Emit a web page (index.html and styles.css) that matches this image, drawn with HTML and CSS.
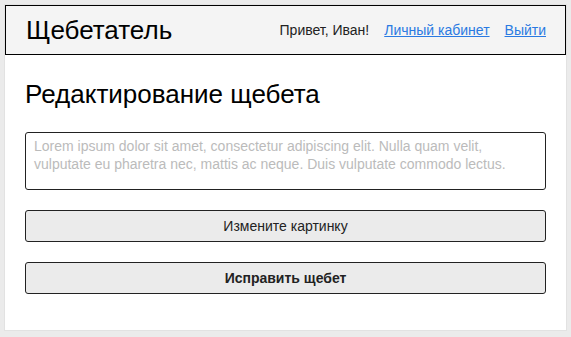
FILE: index.html
```html
<!DOCTYPE html>
<html lang="ru">
<head>
  <meta charset="UTF-8" />
  <title>Редактирование щебета</title>
  <link rel="stylesheet" href="styles.css">
</head>
<body>
  <div class="page">
    <header class="topbar">
      <div class="logo">Щебетатель</div>
      <nav class="user-nav">
        <span class="greeting">Привет, Иван!</span>
        <a href="#">Личный кабинет</a>
        <a href="#">Выйти</a>
      </nav>
    </header>

    <main class="content">
      <h1>Редактирование щебета</h1>
      <form class="edit-form">
        <textarea class="tweet-text" placeholder="Lorem ipsum dolor sit amet, consectetur adipiscing elit. Nulla quam velit, vulputate eu pharetra nec, mattis ac neque. Duis vulputate commodo lectus."></textarea>
        <button type="button" class="btn">Измените картинку</button>
        <button type="submit" class="btn btn-main">Исправить щебет</button>
      </form>
    </main>
  </div>
</body>
</html>
```

FILE: styles.css
```css
body {
  margin: 0;
  padding: 4px;
  background-color: #ebebeb;
  font-family: "Liberation Sans", Arial, sans-serif;
  color: #000;
}
.page {
  background: white;
  border: 1px solid #e2e2e2;
  height: 327px;
  box-sizing: border-box;
}
.topbar {
  display: flex;
  justify-content: space-between;
  align-items: center;
  height: 50px;
  box-sizing: border-box;
  padding: 0 19px 0 20px;
  background-color: #f4f4f4;
  border: 1px solid #000;
}
.logo {
  font-size: 26px;
}
.user-nav {
  display: flex;
  gap: 15px;
  font-size: 14px;
  color: #222;
}
.user-nav a {
  color: #2a7ae2;
}
.content {
  padding: 0 20px 0 20px;
}
h1 {
  font-size: 26px;
  font-weight: normal;
  margin: 24px 0 22px;
}
.edit-form {
  display: flex;
  flex-direction: column;
  gap: 20px;
}
.tweet-text {
  height: 58px;
  box-sizing: border-box;
  padding: 4px 8px;
  border: 1px solid #222;
  border-radius: 3px;
  font-family: inherit;
  font-size: 14px;
  line-height: 18px;
  resize: none;
}
.tweet-text::placeholder {
  color: #bbb;
}
.btn {
  height: 32px;
  font-family: inherit;
  font-size: 14px;
  color: #222;
  background-color: #ebebeb;
  border: 1px solid #222;
  border-radius: 3px;
}
.btn-main {
  font-weight: bold;
}
```
